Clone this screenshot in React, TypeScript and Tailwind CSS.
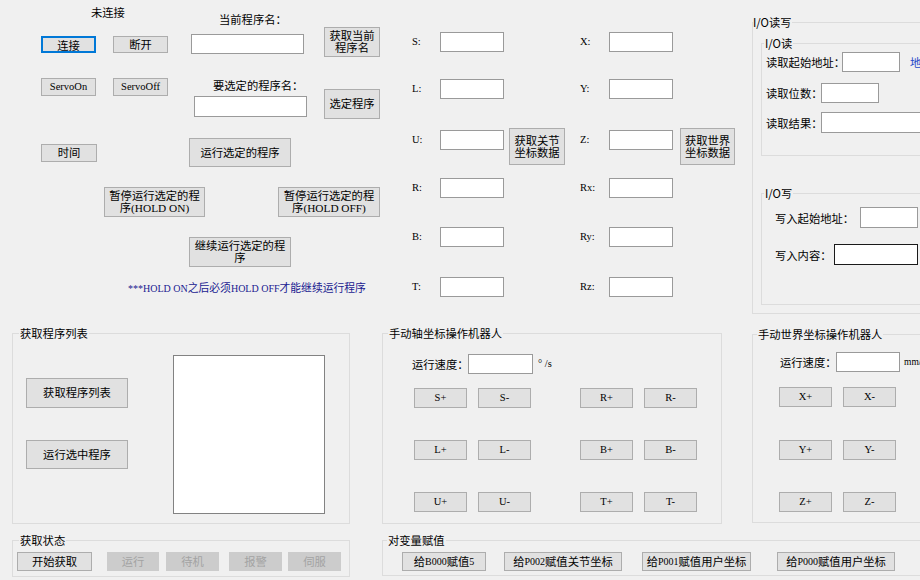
import React from "react";
import clsx from "clsx";

const cn = "font-['Noto_Sans_CJK_SC',sans-serif]";
const latin = "font-['Liberation_Serif','Noto_Sans_CJK_SC',serif]";

type BtnProps = {
  className?: string;
  disabled?: boolean;
  focus?: boolean;
  children: React.ReactNode;
};

function Btn({ className, disabled, focus, children }: BtnProps) {
  return (
    <button
      className={clsx(
        latin,
        "flex shrink-0 items-center justify-center text-center text-[11.3px] leading-[12px]",
        disabled
          ? "border border-[#cccccc] bg-[#cccccc] text-[#a3a3a3]"
          : focus
            ? "border-2 border-[#0078d7] bg-[#e1e1e1] text-black"
            : "border border-[#adadad] bg-[#e1e1e1] text-black",
        className
      )}
    >
      {children}
    </button>
  );
}

function Box({ className }: { className?: string }) {
  return <div className={clsx("shrink-0 border bg-white", className ?? "border-[#9a9a9a]")} />;
}

// latin runs get the narrower size, CJK keeps the button size
function Mix({ t }: { t: string }) {
  return (
    <>
      {t
        .split(/([\u0000-\u00ff]+)/)
        .filter(Boolean)
        .map((s, i) =>
          /^[\u0000-\u00ff]+$/.test(s) ? (
            <span key={i} className="text-[10px]">
              {s}
            </span>
          ) : (
            <span key={i}>{s}</span>
          )
        )}
    </>
  );
}

function Label({ className, children }: { className?: string; children: React.ReactNode }) {
  return <span className={clsx(cn, "shrink-0 whitespace-nowrap text-[11.3px] leading-[14px]", className)}>{children}</span>;
}

function Axis({ className, children }: { className?: string; children: React.ReactNode }) {
  return <span className={clsx(latin, "shrink-0 whitespace-nowrap text-[10.5px] leading-[14px]", className)}>{children}</span>;
}

function Group({
  title,
  className,
  legendClass,
  children,
}: {
  title: string;
  className?: string;
  legendClass?: string;
  children: React.ReactNode;
}) {
  return (
    <fieldset className={clsx("shrink-0 border border-[#dcdcdc]", className)}>
      <legend className={clsx(cn, "px-[1px] text-[11.3px] leading-[14px]", legendClass)}>{title}</legend>
      {children}
    </fieldset>
  );
}

function LeftTop() {
  return (
    <div className="flex w-[380px] shrink-0 flex-col">
      <div className="flex items-start">
        <div className="ml-[41px] flex w-[127px] shrink-0 flex-col items-start">
          <Label className="ml-[50px] mt-[5px]">未连接</Label>
          <div className="mt-[17px] flex">
            <Btn focus className={clsx(cn, "h-[17px] w-[55px]")}>
              连接
            </Btn>
            <Btn className="ml-[17px] h-[17px] w-[55px]">断开</Btn>
          </div>
          <div className="mt-[25px] flex">
            <Btn className="h-[18px] w-[55px] !text-[10.5px]">ServoOn</Btn>
            <Btn className="ml-[17px] h-[18px] w-[55px] !text-[10.5px]">ServoOff</Btn>
          </div>
          <Btn className="mt-[48px] h-[18px] w-[56px]">时间</Btn>
        </div>

        <div className="ml-[21px] flex w-[117px] shrink-0 flex-col items-start">
          <Label className="ml-[30px] mt-[12px]">当前程序名：</Label>
          <Box className="ml-[2px] mt-[8px] h-[20px] w-[113px] border-[#9a9a9a]" />
          <Label className="ml-[24px] mt-[24px]">要选定的程序名：</Label>
          <Box className="ml-[5px] mt-[4px] h-[21px] w-[113px] border-[#9a9a9a]" />
          <Btn className="mt-[21px] h-[29px] w-[102px]">运行选定的程序</Btn>
        </div>

        <div className="ml-[18px] flex w-[56px] shrink-0 flex-col">
          <Btn className="mt-[27px] h-[30px] w-[56px]">
            获取当前
            <br />
            程序名
          </Btn>
          <Btn className="mt-[32px] h-[30px] w-[56px]">选定程序</Btn>
        </div>
      </div>

      <div className="mt-[20px] flex">
        <Btn className="ml-[104px] h-[30px] w-[101px]">
          暂停运行选定的程
          <br />
          序(HOLD ON)
        </Btn>
        <Btn className="ml-[73px] h-[30px] w-[102px]">
          暂停运行选定的程
          <br />
          序(HOLD OFF)
        </Btn>
      </div>

      <Btn className="ml-[189px] mt-[20px] h-[30px] w-[102px]">
        继续运行选定的程
        <br />序
      </Btn>

      <div className={clsx(latin, "ml-[128px] mt-[14px] whitespace-nowrap text-[10.8px] leading-[14px] text-[#1a1a90]")}>
        <Mix t="***HOLD ON之后必须HOLD OFF才能继续运行程序" />
      </div>
    </div>
  );
}

function Coords() {
  return (
    <div className="flex w-[372px] shrink-0 flex-col">
      <div className="mt-[32px] flex h-[20px] items-center">
        <Axis className="ml-[32px] w-[28px]">S:</Axis>
        <Box className="h-[20px] w-[64px] border-[#9a9a9a]" />
        <Axis className="ml-[76px] w-[29px]">X:</Axis>
        <Box className="h-[20px] w-[64px] border-[#9a9a9a]" />
      </div>
      <div className="mt-[27px] flex h-[20px] items-center">
        <Axis className="ml-[32px] w-[28px]">L:</Axis>
        <Box className="h-[20px] w-[64px] border-[#9a9a9a]" />
        <Axis className="ml-[76px] w-[29px]">Y:</Axis>
        <Box className="h-[20px] w-[64px] border-[#9a9a9a]" />
      </div>
      <div className="mt-[29px] flex items-start">
        <div className="mt-[2px] flex h-[20px] items-center">
          <Axis className="ml-[32px] w-[28px]">U:</Axis>
          <Box className="h-[20px] w-[64px] border-[#9a9a9a]" />
        </div>
        <Btn className="ml-[5px] h-[37px] w-[56px]">
          获取关节
          <br />
          坐标数据
        </Btn>
        <div className="mt-[2px] flex h-[20px] items-center">
          <Axis className="ml-[15px] w-[29px]">Z:</Axis>
          <Box className="h-[20px] w-[64px] border-[#9a9a9a]" />
        </div>
        <Btn className="ml-[7px] h-[37px] w-[55px]">
          获取世界
          <br />
          坐标数据
        </Btn>
      </div>
      <div className="mt-[13px] flex h-[20px] items-center">
        <Axis className="ml-[32px] w-[28px]">R:</Axis>
        <Box className="h-[20px] w-[64px] border-[#9a9a9a]" />
        <Axis className="ml-[76px] w-[29px]">Rx:</Axis>
        <Box className="h-[20px] w-[64px] border-[#9a9a9a]" />
      </div>
      <div className="mt-[29px] flex h-[20px] items-center">
        <Axis className="ml-[32px] w-[28px]">B:</Axis>
        <Box className="h-[20px] w-[64px] border-[#9a9a9a]" />
        <Axis className="ml-[76px] w-[29px]">Ry:</Axis>
        <Box className="h-[20px] w-[64px] border-[#9a9a9a]" />
      </div>
      <div className="mt-[30px] flex h-[20px] items-center">
        <Axis className="ml-[32px] w-[28px]">T:</Axis>
        <Box className="h-[20px] w-[64px] border-[#9a9a9a]" />
        <Axis className="ml-[76px] w-[29px]">Rz:</Axis>
        <Box className="h-[20px] w-[64px] border-[#9a9a9a]" />
      </div>
    </div>
  );
}

function IOGroup() {
  return (
    <Group title="I/O读写" className="mt-[15px] h-[299px] w-[200px]" legendClass="!px-0">
      <Group title="I/O读" className="ml-[8px] mt-[7px] h-[120px] w-[200px]" legendClass="ml-[2px]">
        <div className="mt-[2px] flex h-[20px] items-center">
          <Label className="ml-[4px] w-[76px]">读取起始地址：</Label>
          <Box className="h-[20px] w-[58px] border-[#9a9a9a]" />
          <Label className="ml-[10px] text-[#2046c8]">地</Label>
        </div>
        <div className="mt-[11px] flex h-[20px] items-center">
          <Label className="ml-[4px] w-[55px]">读取位数：</Label>
          <Box className="h-[20px] w-[58px] border-[#9a9a9a]" />
        </div>
        <div className="mt-[9px] flex h-[21px] items-center">
          <Label className="ml-[4px] w-[55px]">读取结果：</Label>
          <Box className="h-[21px] w-[120px] border-[#9a9a9a]" />
        </div>
      </Group>
      <Group title="I/O写" className="ml-[8px] mt-[30px] h-[119px] w-[200px]" legendClass="ml-[2px]">
        <div className="mt-[7px] flex h-[21px] items-center">
          <Label className="ml-[13px] w-[85px]">写入起始地址：</Label>
          <Box className="h-[21px] w-[58px] border-[#9a9a9a]" />
        </div>
        <div className="mt-[16px] flex h-[21px] items-center">
          <Label className="ml-[13px] w-[59px]">写入内容：</Label>
          <Box className="h-[21px] w-[84px] border-[#1a1a1a]" />
        </div>
      </Group>
    </Group>
  );
}

const jog = "h-[20px] w-[53px] !text-[10.5px]";

export default function App() {
  return (
    <div className="flex h-[580px] w-[920px] flex-col overflow-hidden bg-[#f0f0f0] text-black">
      <div className="flex h-[326px] shrink-0 items-start">
        <LeftTop />
        <Coords />
        <IOGroup />
      </div>

      <div className="flex h-[207px] shrink-0 items-start">
        <Group title="获取程序列表" className="ml-[12px] h-[198px] w-[338px]" legendClass="ml-[6px]">
          <div className="flex items-start">
            <div className="ml-[13px] flex flex-col">
              <Btn className="mt-[38px] h-[30px] w-[102px]">获取程序列表</Btn>
              <Btn className="mt-[32px] h-[29px] w-[102px]">运行选中程序</Btn>
            </div>
            <div className="ml-[45px] mt-[15px] h-[159px] w-[152px] shrink-0 border border-[#828282] bg-white" />
          </div>
        </Group>

        <Group title="手动轴坐标操作机器人" className="ml-[32px] h-[198px] w-[340px]" legendClass="ml-[5px]">
          <div className="mt-[14px] flex h-[20px] items-center">
            <Label className="ml-[29px] w-[56px]">运行速度：</Label>
            <Box className="h-[20px] w-[65px] border-[#9a9a9a]" />
            <Axis className="ml-[5px]">° /s</Axis>
          </div>
          {[
            ["S", "R", "mt-[14px]"],
            ["L", "B", "mt-[32px]"],
            ["U", "T", "mt-[32px]"],
          ].map(([a, b, mt]) => (
            <div key={a} className={clsx("flex", mt)}>
              <Btn className={clsx("ml-[31px]", jog)}>{a}+</Btn>
              <Btn className={clsx("ml-[11px]", jog)}>{a}-</Btn>
              <Btn className={clsx("ml-[49px]", jog)}>{b}+</Btn>
              <Btn className={clsx("ml-[11px]", jog)}>{b}-</Btn>
            </div>
          ))}
        </Group>

        <Group title="手动世界坐标操作机器人" className="ml-[30px] mt-[1px] h-[196px] w-[200px]" legendClass="ml-[4px]">
          <div className="mt-[11px] flex h-[20px] items-center">
            <Label className="ml-[27px] w-[56px]">运行速度：</Label>
            <Box className="h-[20px] w-[64px] border-[#9a9a9a]" />
            <Axis className="ml-[4px] !text-[9.5px]">mm/</Axis>
          </div>
          {[
            ["X", "mt-[15px]"],
            ["Y", "mt-[33px]"],
            ["Z", "mt-[32px]"],
          ].map(([a, mt]) => (
            <div key={a} className={clsx("flex", mt)}>
              <Btn className={clsx("ml-[26px]", jog)}>{a}+</Btn>
              <Btn className={clsx("ml-[11px]", jog)}>{a}-</Btn>
            </div>
          ))}
        </Group>
      </div>

      <div className="flex shrink-0 items-start">
        <Group title="获取状态" className="ml-[12px] h-[44px] w-[338px]" legendClass="ml-[6px]">
          <div className="mt-[5px] flex">
            <Btn className="ml-[4px] h-[19px] w-[75px]">开始获取</Btn>
            <Btn disabled className="ml-[15px] h-[19px] w-[52px]">
              运行
            </Btn>
            <Btn disabled className="ml-[7px] h-[19px] w-[53px]">
              待机
            </Btn>
            <Btn disabled className="ml-[10px] h-[19px] w-[53px]">
              报警
            </Btn>
            <Btn disabled className="ml-[6px] h-[19px] w-[53px]">
              伺服
            </Btn>
          </div>
        </Group>

        <Group title="对变量赋值" className="ml-[32px] h-[43px] w-[560px]" legendClass="ml-[4px]">
          <div className="mt-[5px] flex">
            <Btn className="ml-[19px] h-[19px] w-[84px]">
              <Mix t="给B000赋值5" />
            </Btn>
            <Btn className="ml-[18px] h-[19px] w-[118px]">
              <Mix t="给P002赋值关节坐标" />
            </Btn>
            <Btn className="ml-[20px] h-[19px] w-[109px]">
              <Mix t="给P001赋值用户坐标" />
            </Btn>
            <Btn className="ml-[26px] h-[19px] w-[118px]">
              <Mix t="给P000赋值用户坐标" />
            </Btn>
          </div>
        </Group>
      </div>
    </div>
  );
}
